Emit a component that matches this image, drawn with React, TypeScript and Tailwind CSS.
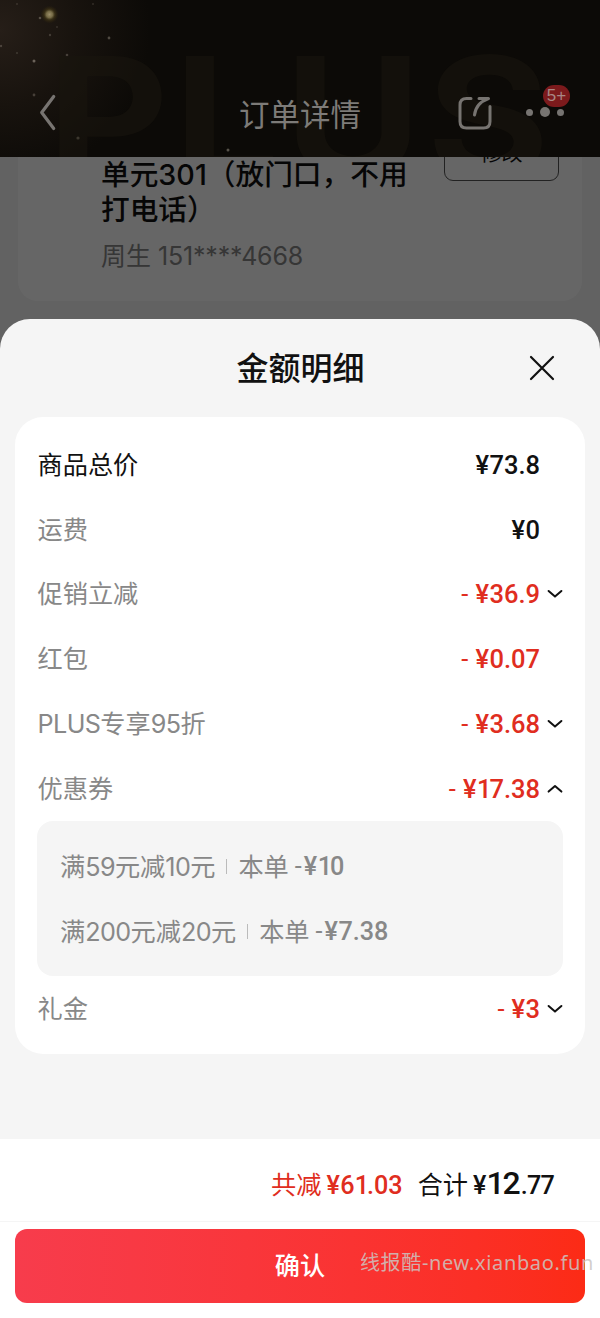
import clsx from 'clsx';

interface Coupon {
  rule: string;
  amount: string;
}

interface AmountRow {
  label: string;
  value: string;
  discount?: boolean;
  strong?: boolean;
  arrow?: 'down' | 'up';
  coupons?: Coupon[];
}

const rows: AmountRow[] = [
  { label: '商品总价', value: '73.8', strong: true },
  { label: '运费', value: '0' },
  { label: '促销立减', value: '36.9', discount: true, arrow: 'down' },
  { label: '红包', value: '0.07', discount: true },
  { label: 'PLUS专享95折', value: '3.68', discount: true, arrow: 'down' },
  {
    label: '优惠券',
    value: '17.38',
    discount: true,
    arrow: 'up',
    coupons: [
      { rule: '满59元减10元', amount: '10' },
      { rule: '满200元减20元', amount: '7.38' },
    ],
  },
  { label: '礼金', value: '3', discount: true, arrow: 'down' },
];

const stars = [
  { x: 40, y: 18, r: 1.3, o: 0.5 },
  { x: 50, y: 35, r: 1.2, o: 0.35 },
  { x: 57, y: 27, r: 1, o: 0.25 },
  { x: 109, y: 38, r: 1.4, o: 0.5 },
  { x: 34, y: 61, r: 1.5, o: 0.7 },
  { x: 67, y: 55, r: 1.3, o: 0.4 },
  { x: 34, y: 95, r: 1.4, o: 0.4 },
  { x: 78, y: 138, r: 1.6, o: 0.7 },
  { x: 228, y: 150, r: 1.5, o: 0.6 },
  { x: 1, y: 46, r: 1.2, o: 0.4 },
  { x: 17, y: 53, r: 1, o: 0.3 },
  { x: 93, y: 4, r: 1, o: 0.25 },
  { x: 17, y: 4, r: 1, o: 0.25 },
];

// The digit 1 sits tighter than the others
function Digits({ text }: { text: string }) {
  return (
    <>
      {text.split(/(1)/).map((part, i) => (
        <span key={i} className={part === '1' ? 'tracking-[-2px]' : undefined}>
          {part}
        </span>
      ))}
    </>
  );
}

// Latin letters and digits are set a little tighter than the Chinese text
function Label({ text }: { text: string }) {
  return (
    <>
      {text.split(/([A-Z0-9]+)/).map((part, i) => (
        <span key={i} className={i % 2 ? 'tracking-[-0.600px]' : undefined}>
          {part}
        </span>
      ))}
    </>
  );
}

function Price({ value, className }: { value: string; className?: string }) {
  return (
    <span className={clsx("font-['Roboto',sans-serif] font-medium", className)}>
      <span className="tracking-[0.500px]">¥</span>
      <Digits text={value} />
    </span>
  );
}

function Chevron({ up }: { up?: boolean }) {
  return (
    <svg viewBox="0 0 16 10" className="h-[10px] w-4" fill="none" stroke="#111" strokeWidth="2" strokeLinecap="round" strokeLinejoin="round">
      <path d={up ? 'M1.600 7.600 L8 2 L14.400 7.600' : 'M1.600 2 L8 7.600 L14.400 2'} />
    </svg>
  );
}

function Header() {
  return (
    <header className="relative z-10 h-[157px] overflow-hidden bg-[#0c0a07]">
      <svg viewBox="0 0 600 157" className="absolute inset-0 h-full w-full">
        <defs>
          <radialGradient id="glow" gradientUnits="userSpaceOnUse" cx="0" cy="30" r="150">
            <stop offset="0" stopColor="#261e18" />
            <stop offset="0.5" stopColor="#18130e" />
            <stop offset="1" stopColor="#0c0a07" />
          </radialGradient>
          <radialGradient id="spark">
            <stop offset="0" stopColor="#9a8d68" />
            <stop offset="0.35" stopColor="#756a45" />
            <stop offset="0.6" stopColor="#3c3216" stopOpacity="0.8" />
            <stop offset="1" stopColor="#2c220c" stopOpacity="0" />
          </radialGradient>
        </defs>
        <rect width="600" height="157" fill="url(#glow)" />
        <circle cx="49.500" cy="14.500" r="9" fill="url(#spark)" />
        {stars.map(s => (
          <circle key={`${s.x}-${s.y}`} cx={s.x} cy={s.y} r={s.r} fill="#8b8378" opacity={s.o} />
        ))}
      </svg>
      <div className="absolute top-[6px] left-[47px] origin-left scale-x-[1.140] font-['Inter',sans-serif] text-[165px] leading-[220px] font-bold tracking-[4px] whitespace-nowrap text-[#19150f]/55">
        PLUS
      </div>

      <div className="relative flex h-full items-end justify-between pr-[22px] pb-5 pl-[38px]">
        <svg viewBox="0 0 20 50" className="h-[50px] w-5" fill="none" stroke="#777471" strokeWidth="3.200" strokeLinecap="round" strokeLinejoin="round">
          <path d="M15.700 9.500 L3.700 25.500 L15.700 41.500" />
        </svg>
        <h1 className="absolute inset-x-0 bottom-6 text-center text-[30.500px] leading-9 text-[#7d7b78]">订单详情</h1>
        <div className="flex h-[50px] items-center">
          <svg viewBox="0 0 36 36" className="mt-1 mr-[31px] h-9 w-9" fill="none" stroke="#777471" strokeWidth="3" strokeLinecap="round" strokeLinejoin="round">
            <path d="M14 2.500 H9.500 Q3 2.500 3 9 V25.500 Q3 32 9.500 32 H26.500 Q33 32 33 25.500 V10.500" />
            <path d="M22 2.500 H31.500 Q19 7 17.500 19" />
          </svg>
          <div className="relative flex w-[54px] items-center gap-[7px] pl-[2px]">
            <i className="h-[7px] w-[7px] rounded-full bg-[#777471]" />
            <i className="h-[10px] w-[10px] rounded-full bg-[#777471]" />
            <i className="h-[7px] w-[7px] rounded-full bg-[#777471]" />
            <span className="absolute -top-[22px] left-[19px] flex h-[22px] w-[27px] items-center justify-center rounded-full bg-[#7c1a1c] font-['Liberation_Sans',sans-serif] text-[17px] text-[#a98885]">
              5+
            </span>
          </div>
        </div>
      </div>
    </header>
  );
}

function AddressCard() {
  return (
    <section className="relative h-[194px] overflow-hidden bg-[#f5f5f5]">
      <div className="mx-[18px] -mt-10 flex h-[184px] rounded-[20px] bg-white pr-[23px] pl-[83px]">
        <div className="flex-1 pt-10">
          <p className="w-[320px] text-[28.700px] leading-[35px] font-medium whitespace-nowrap text-[#111]">
            单元301（放门口，不用
            <br />
            打电话）
          </p>
          <p className="mt-3 text-[25px] leading-[35px] text-[#888]">
            周生 <span className="tracking-[-0.200px]">151****4668</span>
          </p>
        </div>
        <button className="mt-2 flex h-[56px] w-[115px] shrink-0 items-center justify-center rounded-[9px] border border-[#555] text-[21px] text-[#111]">
          修改
        </button>
      </div>
      <div className="absolute inset-0 bg-black/60" />
    </section>
  );
}

function Row({ row }: { row: AmountRow }) {
  return (
    <>
      <div className="flex h-[64.800px] items-center justify-between pt-px pr-[22px] pl-[22.500px]">
        <span className={clsx('text-[25.200px] leading-9', row.strong ? 'text-[#111]' : 'text-[#888]')}>
          <Label text={row.label} />
        </span>
        <div className={clsx('flex items-center text-[25.500px] leading-9', row.discount ? 'text-[#e02d20]' : 'text-[#111]')}>
          {row.discount && <span className="mr-[7px] font-['Roboto',sans-serif]">-</span>}
          <Price value={row.value} />
          <span className="ml-[7px] w-4">{row.arrow && <Chevron up={row.arrow === 'up'} />}</span>
        </div>
      </div>
      {row.coupons && (
        <div className="mx-[22px] rounded-2xl bg-[#f5f5f5] px-[23px] py-[12.500px] text-[25.200px] leading-9 text-[#888]">
          {row.coupons.map(c => (
            <div key={c.rule} className="flex h-[65px] items-center pt-[2px]">
              <span>
                <Label text={c.rule} />
              </span>
              <i className="mx-[11px] h-[15px] w-px bg-[#bbb]" />
              <span className="mr-[6px]">本单</span>
              <span className="mr-[2px] font-['Roboto',sans-serif]">-</span>
              <Price value={c.amount} />
            </div>
          ))}
        </div>
      )}
    </>
  );
}

export default function App() {
  return (
    <div className="relative flex h-[1318px] w-[600px] flex-col overflow-hidden bg-white font-['Inter','Noto_Sans_CJK_SC',sans-serif]">
      <Header />
      <AddressCard />

      {/* Amount sheet */}
      <div className="relative -mt-8 flex flex-1 flex-col rounded-t-[30px] bg-[#f5f5f5]">
        <div className="relative flex h-[98px] items-center justify-center pt-[2px] pl-px">
          <h2 className="text-[32px] leading-10 font-medium text-[#111]">金额明细</h2>
          <button className="absolute top-9 right-[45px]" aria-label="关闭">
            <svg viewBox="0 0 26 26" className="h-[26px] w-[26px]" fill="none" stroke="#111" strokeWidth="2.200" strokeLinecap="round">
              <path d="M2 2 L24 24 M24 2 L2 24" />
            </svg>
          </button>
        </div>
        <div className="mx-[15px] h-[637px] rounded-[28px] bg-white pt-[15px]">
          {rows.map(row => (
            <Row key={row.label} row={row} />
          ))}
        </div>

        {/* Footer */}
        <footer className="mt-auto h-[179px] bg-white">
          <div className="flex h-[83px] items-baseline justify-end border-b border-[#f5f5f5] pt-[26px] pr-[46px] text-[25.200px] leading-9 text-[#111]">
            <span className="mr-[5px] text-[#e02d20]">共减</span>
            <Price value="61.03" className="text-[#e02d20]" />
            <span className="mr-[5px] ml-[15px]">合计</span>
            <span className="font-['Roboto',sans-serif] font-medium">
              ¥
              <span className="text-[32px]">
                <Digits text="12" />
              </span>
              <span className="tracking-[-0.800px]">.77</span>
            </span>
          </div>
          <button className="mx-[15px] mt-[7px] flex h-[74px] w-[570px] items-center justify-center rounded-xl bg-linear-to-r from-[#f73c4c] to-[#fc2b15] pt-[2px] text-[25.200px] font-medium text-white">
            确认
          </button>
        </footer>
      </div>

      <span className="absolute right-[6px] bottom-[43px] font-['Noto_Sans','Noto_Sans_CJK_SC',sans-serif] text-[20px] leading-6 tracking-[0.640px] whitespace-nowrap text-[#cbc6c2]/85">
        线报酷-new.xianbao.fun
      </span>
    </div>
  );
}
